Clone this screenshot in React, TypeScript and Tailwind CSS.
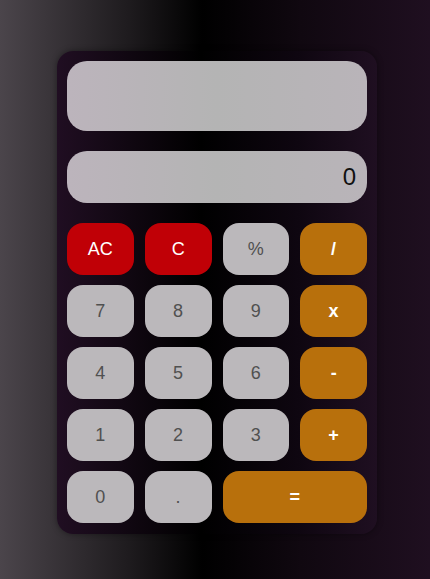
import React from "react";

type Key = { label: string; kind: "num" | "clear" | "op"; wide?: boolean };

const keys: Key[] = [
  { label: "AC", kind: "clear" },
  { label: "C", kind: "clear" },
  { label: "%", kind: "num" },
  { label: "/", kind: "op" },
  { label: "7", kind: "num" },
  { label: "8", kind: "num" },
  { label: "9", kind: "num" },
  { label: "x", kind: "op" },
  { label: "4", kind: "num" },
  { label: "5", kind: "num" },
  { label: "6", kind: "num" },
  { label: "-", kind: "op" },
  { label: "1", kind: "num" },
  { label: "2", kind: "num" },
  { label: "3", kind: "num" },
  { label: "+", kind: "op" },
  { label: "0", kind: "num" },
  { label: ".", kind: "num" },
  { label: "=", kind: "op", wide: true },
];

const styles = {
  num: "bg-[#bbb8bb] text-[#505050] font-normal",
  clear: "bg-[#c00006] text-white font-normal",
  op: "bg-[#b8700c] text-white font-bold",
};

export default function App() {
  return (
    <div className="min-h-[579px] w-full bg-[linear-gradient(to_right,#4b454b_0%,#1e1b1e_30%,#000_47%,#100810_70%,#1f0f20_100%)] pt-[51px] font-['Liberation_Sans',Arial,sans-serif]">
      <div className="ml-[57px] w-[320px] rounded-[16px] bg-[linear-gradient(to_right,#200e22_0%,#000_45%,#0e0610_75%,#1f0f21_100%)] px-[10px] pt-[10px] pb-[11px] shadow-[0_0_6px_rgba(0,0,0,0.4)]">
        <div className="h-[70px] rounded-[20px] bg-[linear-gradient(to_right,#bcb4bc,#b4b4b4_50%,#b9b4b9)]" />
        <div className="mt-[20px] flex h-[52px] items-center justify-end rounded-[20px] bg-[linear-gradient(to_right,#bcb4bc,#b4b4b4_50%,#b9b4b9)] pr-[11px] text-[24px] text-[#111]">
          0
        </div>
        <div className="mt-[20px] grid grid-cols-4 gap-x-[11px] gap-y-[10px]">
          {keys.map((k) => (
            <button
              key={k.label}
              className={`flex h-[52px] items-center justify-center rounded-[16px] text-[18px] ${styles[k.kind]} ${k.wide ? "col-span-2" : ""}`}
            >
              {k.label}
            </button>
          ))}
        </div>
      </div>
    </div>
  );
}
